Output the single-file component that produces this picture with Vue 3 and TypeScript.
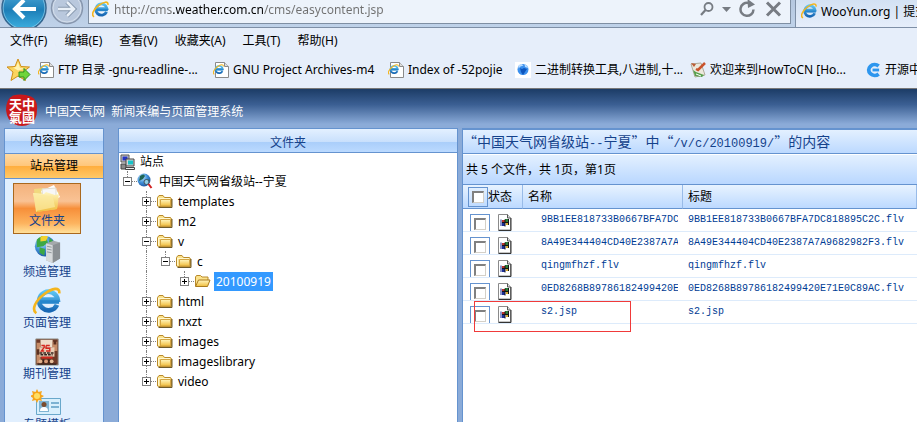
<script setup lang="ts">
import { ref } from 'vue'

interface Fav { label: string; icon: string; wide: boolean }
interface Node { label: string; level: number; open: boolean; selected?: boolean }
interface FileRow { name: string; marked?: boolean }

const address = ref('http://cms.weather.com.cn/cms/easycontent.jsp')
const menus: string[] = ['文件(F)', '编辑(E)', '查看(V)', '收藏夹(A)', '工具(T)', '帮助(H)']
const favs: Fav[] = [
  { label: 'FTP 目录 -gnu-readline-...', icon: 'page', wide: true },
  { label: 'GNU Project Archives-m4', icon: 'page', wide: true },
  { label: 'Index of -52pojie', icon: 'page', wide: false },
  { label: '二进制转换工具,八进制,十...', icon: 'globe', wide: true },
  { label: '欢迎来到HowToCN [Ho...', icon: 'brush', wide: true },
  { label: '开源中国', icon: 'osc', wide: true },
]
const tools: { label: string; icon: string }[] = [
  { label: '文件夹', icon: 'folder' },
  { label: '频道管理', icon: 'server' },
  { label: '页面管理', icon: 'ie' },
  { label: '期刊管理', icon: 'magazine' },
  { label: '专题模板', icon: 'template' },
]
const nodes: Node[] = [
  { label: 'templates', level: 1, open: false },
  { label: 'm2', level: 1, open: false },
  { label: 'v', level: 1, open: true },
  { label: 'c', level: 2, open: true },
  { label: '20100919', level: 3, open: false, selected: true },
  { label: 'html', level: 1, open: false },
  { label: 'nxzt', level: 1, open: false },
  { label: 'images', level: 1, open: false },
  { label: 'imageslibrary', level: 1, open: false },
  { label: 'video', level: 1, open: false },
]
const files: FileRow[] = [
  { name: '9BB1EE818733B0667BFA7DC818895C2C.flv' },
  { name: '8A49E344404CD40E2387A7A9682982F3.flv' },
  { name: 'qingmfhzf.flv' },
  { name: '0ED8268B89786182499420E71E0C89AC.flv' },
  { name: 's2.jsp', marked: true },
]
</script>

<template>
  <div class="window">
    <svg class="defs" width="0" height="0" aria-hidden="true">
      <defs>
        <linearGradient id="backFill" x1="0" y1="0" x2="0" y2="1">
          <stop offset="0" stop-color="#5fb4e0" /><stop offset=".55" stop-color="#1d7fb8" /><stop offset="1" stop-color="#3fb2e2" />
        </linearGradient>
        <linearGradient id="ieFill" x1="0" y1="0" x2="0" y2="1">
          <stop offset="0" stop-color="#5cc4f2" /><stop offset="1" stop-color="#1767b4" />
        </linearGradient>
        <linearGradient id="gold" x1="0" y1="0" x2="0" y2="1">
          <stop offset="0" stop-color="#fff6c0" /><stop offset="1" stop-color="#f0bd3c" />
        </linearGradient>
        <radialGradient id="ball" cx=".35" cy=".3" r=".8">
          <stop offset="0" stop-color="#c8ecff" /><stop offset=".5" stop-color="#3f8fd8" /><stop offset="1" stop-color="#174a94" />
        </radialGradient>
        <symbol id="ie" viewBox="0 0 16 16">
          <path d="M13.7 10.2a5.3 5.3 0 1 1 .4-3H4.2" fill="none" stroke="url(#ieFill)" stroke-width="2.7" />
          <path d="M4 8.6h10.9" stroke="#2686cc" stroke-width="2" />
          <path d="M1.9 15C-1 13 1.3 7.800 6.500 4 11 .6 15.500-.2 15 3.600" fill="none" stroke="#f4b51e" stroke-width="1.500" />
        </symbol>
        <symbol id="closedFolder" viewBox="0 0 17 16">
          <path d="M1.500 13V4.500L3 2.500h4l1.500 2h6l1 1.500v7.500h-13z" fill="#fbe28c" stroke="#b98a2a" />
          <path d="M4.500 6.500h10V13h-10z" fill="url(#gold)" stroke="#d3a544" />
          <path d="M2.500 14.500h13.500V6" fill="none" stroke="#6d5a2a" />
          <path d="M3 5.500h11M2.500 5v7" fill="none" stroke="#fff8cf" />
        </symbol>
        <symbol id="openFolder" viewBox="0 0 17 16">
          <path d="M1.500 13V4l1-1.500h4L8 4h6v3" fill="#fbe28c" stroke="#b98a2a" />
          <path d="M1.500 13.500 4.500 7h11.500l-2.500 6.500z" fill="url(#gold)" stroke="#a97a1c" />
        </symbol>
      </defs>
    </svg>

    <header class="browser">
      <div class="navbar">
        <div class="history">
          <button class="plain" aria-label="Back">
            <svg width="50" height="27" viewBox="0 0 50 27">
              <circle cx="24" cy="8" r="22" fill="url(#backFill)" stroke="#35668f" stroke-width="1.500" />
              <circle cx="24" cy="8" r="20.800" fill="none" stroke="#9fd6f0" opacity=".6" />
              <path d="M36 9H15M24 0l-9 9 9 9" fill="none" stroke="#fff" stroke-width="4" />
            </svg>
          </button>
          <button class="plain" aria-label="Forward">
            <svg width="36" height="27" viewBox="50 0 36 27">
              <circle cx="67" cy="8" r="15.500" fill="#b9c8dd" stroke="#8796ad" stroke-width="1.500" />
              <circle cx="67" cy="8" r="14" fill="none" stroke="#d5dfec" />
              <path d="M58 9h16M67 2l7 7-7 7" fill="none" stroke="#8798ae" stroke-width="4.500" />
              <path d="M58 9h16M67 2l7 7-7 7" fill="none" stroke="#e9f0f8" stroke-width="2.500" />
            </svg>
          </button>
        </div>
        <div class="address">
          <svg width="17" height="17"><use href="#ie" /></svg>
          <input v-model="address" type="text" aria-label="Address" />
          <button class="plain" aria-label="Search">
            <svg width="14" height="16" viewBox="0 0 14 16"><circle cx="8.500" cy="6" r="4" fill="none" stroke="#777c83" stroke-width="1.800" /><path d="M5.500 9 1 14" stroke="#777c83" stroke-width="2.200" /></svg>
          </button>
          <button class="plain drop" aria-label="History">
            <svg width="9" height="5" viewBox="0 0 9 5"><path d="M0 0h9L4.500 5z" fill="#777c83" /></svg>
          </button>
          <button class="plain" aria-label="Refresh">
            <svg width="17" height="18" viewBox="0 0 17 18"><path d="M14.500 9.500A6.500 6.500 0 1 1 9.500 3" fill="none" stroke="#777c83" stroke-width="2.500" /><path d="M8.500-1 16 4.500 9 8z" fill="#777c83" /></svg>
          </button>
          <button class="plain" aria-label="Stop">
            <svg width="17" height="18" viewBox="0 0 17 18"><path d="m2 2.500 13 13m0-13-13 13" stroke="#777c83" stroke-width="3" /></svg>
          </button>
        </div>
        <a class="tab" href="#">
          <svg width="16" height="16"><use href="#ie" /></svg>
          <span>WooYun.org | 提交漏洞</span>
        </a>
      </div>

      <nav class="menubar">
        <button v-for="m in menus" :key="m" class="plain">{{ m }}</button>
      </nav>

      <nav class="favbar">
        <button class="plain star" aria-label="Add to favorites">
          <svg width="24" height="24" viewBox="0 0 24 24">
            <path d="m11 1 3 7.500 8.500.5-6.500 5 2.500 8.500L11 18l-7 4.500L6 14 0 9l8-.5z" fill="#fbd55e" stroke="#cf8f1b" />
            <path d="m11 4 2 6 5 .5-7 2-5-3 3-.5z" fill="#fff3b4" />
            <path d="M12 14h5v-3.500l6 6-6 6V19h-5z" fill="#6fd53a" stroke="#2f9120" />
          </svg>
        </button>
        <a v-for="f in favs" :key="f.label" href="#" class="fav" :class="{ wide: f.wide }">
          <svg v-if="f.icon === 'page'" width="16" height="16" viewBox="0 0 16 16">
            <path d="M2.500.5h9l4 4v11h-13z" fill="#fff" stroke="#8a8a8a" /><path d="M11.500.5v4h4" fill="#ddd" stroke="#8a8a8a" />
            <use href="#ie" x="0" y="2" width="11" height="11" />
          </svg>
          <svg v-else-if="f.icon === 'globe'" width="16" height="16" viewBox="0 0 16 16">
            <path d="M0 0h16v16H0z" fill="#fff" /><circle cx="8" cy="7.500" r="5.500" fill="#3b90ee" />
            <path d="m3.500 3 3-1 2 1.500-3 1-2 2zm6-1 3 2 .5 2-3-1z" fill="#b9dcff" /><path d="m5 6 2 1 2-1 3 1-2 3-2 3-2-3z" fill="#0d55bd" />
          </svg>
          <svg v-else-if="f.icon === 'brush'" width="16" height="16" viewBox="0 0 16 16">
            <path d="m1 2 10-1 4 12-10 2z" fill="#ece8dc" stroke="#b0aa9a" /><path d="m1 1 5 1-2 3z" fill="#bb5b35" />
            <path d="m6 7 2 1 7-7" fill="none" stroke="#c9532d" stroke-width="2.500" /><path d="m3 8 3 2 8 3-2 2-7-1z" fill="#58a04e" /><path d="m6 12 5 2" stroke="#fff" />
          </svg>
          <svg v-else width="16" height="16" viewBox="0 0 17 16">
            <path d="M14.500 3.800A6.300 5.700 0 1 0 14.500 12.200" fill="none" stroke="#2d96ee" stroke-width="4" /><path d="M8 8h7" stroke="#2d96ee" stroke-width="3" />
          </svg>
          <span>{{ f.label }}</span>
        </a>
      </nav>
    </header>

    <div class="app">
      <div class="banner">
        <svg width="32" height="33" viewBox="0 0 32 33" role="img">
          <path d="M7 1.500Q16-1 25 2.500 32 6 31 16q0 10-7 14-8 4-16 0Q1 26 0 16 0 5 7 1.500z" fill="#c9181b" />
          <g class="seal"><text x="3" y="15">天</text><text x="16" y="15">中</text><text x="3" y="28">氣</text><text x="16" y="28">國</text></g>
        </svg>
        <h1>中国天气网&nbsp; 新闻采编与页面管理系统</h1>
      </div>

      <div class="columns">
        <aside class="sidebar">
          <button class="section">内容管理</button>
          <button class="section active">站点管理</button>
          <nav class="tools">
            <button v-for="(t, i) in tools" :key="t.label" class="tool" :class="{ current: i === 0 }">
              <svg v-if="t.icon === 'folder'" width="32" height="28" viewBox="0 0 32 28">
                <path d="m3 4 10-1 2 2 13 2-2 17-21 3z" fill="#f1d97f" /><path d="m10 6 13-6 6 12-15 8z" fill="#fff" /><path d="m11 4 14-1v12H12z" fill="#f7f7f7" stroke="#e1ddd0" />
                <path d="m2 8 11 1 2-2 9 3 4-1-2 15-20 3z" fill="url(#gold)" /><path d="m2 8 3 18 19-4-2-10z" fill="#fbeaa0" opacity=".7" />
              </svg>
              <svg v-else-if="t.icon === 'server'" width="32" height="30" viewBox="0 0 32 30">
                <circle cx="14" cy="11" r="11" fill="url(#ball)" /><path d="M5 4q6-6 10-3l2 6-5 4-7 1zm3 8 6 2-1 7-5-3zM19 2l5 5-3 4-3-4z" fill="#3da844" /><path d="M9 1q6-3 8 0l-2 4-6 1z" fill="#f1d22f" />
                <path d="m15 8 8-3 7 2v17l-8 5-7-3z" fill="#a5a9ac" /><path d="m22 10 8-3v17l-8 5z" fill="#8b9094" /><path d="m15 8 7 2v19l-7-3z" fill="#d7dadc" /><path d="m16 11 5 1m-5 2 5 1m-5 2 5 1" stroke="#8e9498" />
              </svg>
              <svg v-else-if="t.icon === 'ie'" width="30" height="30"><use href="#ie" /></svg>
              <svg v-else-if="t.icon === 'magazine'" width="26" height="30" viewBox="0 0 26 30">
                <path d="M1 1h24v28H1z" fill="#6e3a28" stroke="#9a9a92" /><path d="M6 2h13v8H6z" fill="#efdcc8" /><path d="M2 5h4v22H2zM19 4h5v10h-5z" fill="#c58b66" /><path d="M20 3h3v4h-3zM2 12h3v6H2z" fill="#5a3020" />
                <path d="M5 10h16v10H5z" fill="#e9cdb5" /><path d="M7 8h3v2l-3 4h3m2-6h4m-4 0v3h4v3h-4" fill="none" stroke="#d4271e" stroke-width="1.500" /><path d="M5 16h16M6 18h13" stroke="#33231d" stroke-width="1.500" stroke-dasharray="3 1" /><path d="M7 20h12v2H7z" fill="#d4271e" />
                <circle cx="6" cy="25" r="2" fill="#e0b28d" /><circle cx="12" cy="25" r="2" fill="#d69a77" /><circle cx="18" cy="25" r="2" fill="#e8c09b" /><path d="M3 28h20M9 23v4m6-4v4" stroke="#1d1512" />
              </svg>
              <svg v-else width="32" height="28" viewBox="0 0 32 28">
                <path d="M5.500 9.500h24v16h-24z" fill="#d8effc" stroke="#69a8cb" /><path d="M8 12h10v11H8z" fill="#7fb4d3" /><circle cx="13" cy="15.500" r="2.500" fill="#7a4c2e" /><path d="M9 22q0-4 4-4t4 4z" fill="#fff" /><path d="M20 14h8m-8 4h8" stroke="#5d9fc4" stroke-width="1.500" />
                <path d="m6 0 1.500 3L11 2l-1 3.500 3 1.500-3 2 1 3-3.500-1L6 14l-1.500-3L1 12l1-3-3-2 3-1.500L1 2l3.500 1z" fill="#f6a51b" /><circle cx="6" cy="7" r="3" fill="#ffdf63" />
              </svg>
              <span>{{ t.label }}</span>
            </button>
          </nav>
        </aside>

        <section class="treepanel">
          <h2>文件夹</h2>
          <div class="site">
            <svg width="15" height="16" viewBox="0 0 15 16">
              <path d="M1 1h8v7H1z" fill="#c9c9c9" stroke="#555" /><path d="M2.500 2.500h5v4h-5z" fill="#2434c4" /><path d="M1 10h5v5H1z" fill="#8a8a8a" stroke="#444" /><path d="M6 5h8v7H6z" fill="#d6d6d6" stroke="#444" /><path d="M8 6.500h5v4H8z" fill="#18c3c9" /><path d="M5.500 13.500h9v2h-9z" fill="#eee" stroke="#444" />
            </svg>
            <span>站点</span>
          </div>
          <ul class="tree">
            <li class="node root">
              <button class="toggle open" aria-label="Toggle"></button><i class="stub"></i>
              <svg width="16" height="16" viewBox="0 0 16 16"><circle cx="7" cy="7" r="6.500" fill="url(#ball)" /><path d="M3 3q4-3 5 0L6 6 2 8zm6 3 4 1-3 5-2-3z" fill="#1f6655" /><circle cx="9.500" cy="9" r="2.500" fill="#8fd0e6" stroke="#456" /><path d="m11.500 11 3 4" stroke="#d02020" stroke-width="2" /></svg>
              <span class="label">中国天气网省级站--宁夏</span>
            </li>
            <li v-for="n in nodes" :key="n.label" class="node" :class="['level' + n.level]">
              <button class="toggle" :class="{ open: n.open }" aria-label="Toggle"></button><i class="stub"></i>
              <svg width="17" height="16"><use :href="n.selected ? '#openFolder' : '#closedFolder'" /></svg>
              <span class="label" :class="{ selected: n.selected }">{{ n.label }}</span>
            </li>
          </ul>
        </section>

        <main class="content">
          <h2 class="title">“中国天气网省级站<span>--</span>宁夏”<span> </span>中<span> </span>“<span>/v/c/20100919/</span>”<span> </span>的内容</h2>
          <p class="info">共 5 个文件，共 1页，第1页</p>
          <table>
            <colgroup><col class="c1" /><col class="c2" /><col /></colgroup>
            <thead>
              <tr>
                <th><label class="headcheck"><span class="box"><input type="checkbox" /></span>状态</label></th>
                <th>名称</th>
                <th>标题</th>
              </tr>
            </thead>
            <tbody>
              <tr v-for="f in files" :key="f.name">
                <td>
                  <div class="state">
                    <label class="box"><input type="checkbox" :aria-label="f.name" /></label>
                    <svg width="14" height="17" viewBox="0 0 14 17"><path d="M.5.500h9l3 3.500v12H.5z" fill="#fff" stroke="#8a8a8a" /><path d="M9.500.5V4h3" fill="#ddd" stroke="#555" /><path d="M.5 16.500h12.500V4" fill="none" stroke="#333" /><path d="M2 5.500h2V12H2z" fill="#8a93c8" /><path d="M4 6h3v3H4z" fill="#b8302b" /><path d="M7 5h4v3H7z" fill="#2c7d3a" /><path d="M4 9h3v3H4z" fill="#1c2f96" /><path d="M8 9h3v2H8z" fill="#d9a92c" /><path d="M7 5.500v7M4 8.500h7M10.500 5v6" stroke="#151515" /></svg>
                  </div>
                  <div v-if="f.marked" class="mark"></div>
                </td>
                <td><div class="clip">{{ f.name }}</div></td>
                <td><div class="full">{{ f.name }}</div></td>
              </tr>
            </tbody>
          </table>
        </main>
      </div>
    </div>
  </div>
</template>

<style>
body { overflow: hidden; }
</style>

<style scoped>
* { box-sizing: border-box; }
.window { height: 100vh; display: flex; flex-direction: column; overflow: hidden; font: 12px/16px "Noto Sans", "Noto Sans CJK SC", sans-serif; color: #000; }
.defs { position: absolute; }
svg { flex: none; display: block; }
button { font: inherit; color: inherit; cursor: pointer; }
.plain { padding: 0; border: 0; background: none; white-space: nowrap; }
a { color: inherit; text-decoration: none; white-space: nowrap; }
h1, h2, p, ul { margin: 0; padding: 0; font-weight: normal; }

.browser { flex: none; background: #e6eefa; border-bottom: 1px solid #777; }
.navbar { display: flex; height: 28px; background: linear-gradient(#b5c7df, #bfd2e9); border-bottom: 1px solid #7e8fa6; overflow: hidden; }
.history { display: flex; width: 88px; }
.address { flex: 1; display: flex; align-items: center; gap: 5px; height: 24px; padding: 0 6px 5px 3px; background: #edf3fb; border: 1px solid #7f8fa3; border-top: 0; }
.address input { flex: 1; min-width: 0; height: 19px; padding: 0; border: 0; outline: 0; font: 12px/19px "Noto Sans", sans-serif; color: transparent; background: linear-gradient(90deg, #707070 59px, #000 59px, #000 149px, #707070 149px); -webkit-background-clip: text; background-clip: text; }
.address .plain { padding: 0 2px; }
.address .drop { padding: 0 1px; }
.tab { display: flex; align-items: flex-start; gap: 4px; width: 122px; margin-left: 4px; padding: 3px 0 0 5px; background: linear-gradient(#d3e1f3, #e6eefa); border-left: 1px solid #7e8fa6; overflow: hidden; line-height: 17px; }

.menubar { display: flex; gap: 17px; height: 26px; padding: 3px 10px; line-height: 18px; }
.favbar { display: flex; align-items: center; gap: 10px; height: 34px; padding: 0 0 2px 7px; overflow: hidden; }
.star { margin-right: -3px; }
.fav { flex: none; display: flex; align-items: center; gap: 4px; width: 117px; }
.wide { width: 165px; }

.app { flex: 1; min-height: 0; display: flex; flex-direction: column; background: #8babd8; }
.banner { flex: none; display: flex; gap: 7px; height: 39px; padding: 5px 6px 0; background: linear-gradient(#1c3c66, #3b5f93 40%, #8babd8 90%); color: #fff; }
.banner h1 { padding-top: 10px; font-size: 12px; line-height: 16px; }
.seal { fill: #fff; font: bold 13px "Noto Sans CJK SC", sans-serif; }

.columns { flex: 1; min-height: 0; display: flex; padding-left: 4px; }
.sidebar { flex: none; width: 100px; display: flex; flex-direction: column; background: #e1effe; border: solid #6593cf; border-width: 1px 1px 0; overflow: hidden; }
.section { flex: none; height: 25px; padding: 0 0 1px; border: 0; border-bottom: 1px solid #6593cf; background: linear-gradient(#e3f0ff, #c8dffb 48%, #aacefa 50%, #bbdaff); }
.section.active { background: linear-gradient(#ffd9a3, #ffc77c 48%, #ffad3e 50%, #ffc968); }
.tools { display: flex; flex-direction: column; padding: 4px 0 0 8px; }
.tool { flex: none; width: 68px; height: 51px; display: flex; flex-direction: column; align-items: center; padding: 1px 0 0; border: 1px solid transparent; background: none; color: #15428b; }
.tool svg { height: 28px; }
.tool.current { border-color: #a9681e; background: linear-gradient(#f3b27c, #f9c294 35%, #f78f3a 50%, #fdb35e 80%, #ffe09a); }

.treepanel { flex: 1; min-width: 200px; max-width: 340px; margin-left: 14px; background: #fff; border: solid #6593cf; border-width: 1px 1px 0; overflow: hidden; }
.treepanel h2 { height: 24px; padding-top: 6px; font-size: 12px; line-height: 16px; text-align: center; color: #15428b; border-bottom: 1px solid #6593cf; background: linear-gradient(#e3f0ff, #c9e0fc 55%, #aacefa 58%, #bbdaff); }
.site { display: flex; align-items: center; gap: 5px; height: 18px; padding-left: 1px; }
.tree { list-style: none; }
.node { position: relative; display: flex; align-items: center; height: 20px; padding-left: 23px; }
.node.root { padding-left: 4px; }
.level2 { padding-left: 42px; }
.level3 { padding-left: 61px; }
.node::before { content: ""; position: absolute; left: 27px; top: 0; height: 20px; border-left: 1px dotted #808080; }
.root::before { left: 8px; height: 10px; }
.node:last-child::before { height: 10px; }
.level2::after, .level3::after { content: ""; position: absolute; left: 46px; top: 0; height: 10px; border-left: 1px dotted #808080; }
.level3::after { left: 65px; }
.toggle { position: relative; z-index: 1; flex: none; width: 9px; height: 9px; padding: 0; border: 1px solid #808080; background: linear-gradient(#000, #000) center / 5px 1px no-repeat, linear-gradient(#000, #000) center / 1px 5px no-repeat, #fff; }
.toggle.open { background: linear-gradient(#000, #000) center / 5px 1px no-repeat, #fff; }
.stub { width: 5px; border-top: 1px dotted #808080; }
.label { margin-left: 3px; padding: 0 2px; line-height: 19px; white-space: nowrap; }
.root .label { margin-left: 4px; }
.selected { background: #3399ff; color: #fff; }

.content { flex: 1 1 116px; min-width: 0; margin-left: 4px; background: #fff; border: solid #6593cf; border-width: 2px 0 0 1px; }
.title { height: 24px; padding: 3px 0 0; font: 14px/17px "Noto Sans CJK SC", sans-serif; color: #15428b; white-space: pre; border-bottom: 1px solid #6593cf; background: linear-gradient(#e3f0ff, #bcd9ff); }
.title span { font: 12px/17px "Liberation Mono", monospace; }
.info { height: 30px; padding: 7px 3px; line-height: 16px; border-top: 1px solid #fff; background: linear-gradient(#e3f0ff, #b9d7ff); }
table { width: 100%; table-layout: fixed; border-collapse: separate; border-spacing: 0; border-top: 1px solid #6593cf; }
.c1 { width: 60px; }
.c2 { width: 160px; }
th { height: 24px; padding: 0 5px; text-align: left; font-weight: normal; border-bottom: 1px solid #6593cf; border-right: 1px solid #99bbe8; background: linear-gradient(#e8f3ff, #bcd9ff); }
th:first-child { padding-right: 0; }
.headcheck { display: flex; align-items: center; line-height: 20px; }
.box { flex: none; display: block; width: 20px; height: 20px; padding: 3px; border: 1px solid #6593cf; }
input[type="checkbox"] { appearance: none; display: block; width: 12px; height: 12px; margin: 0; background: #fff; border: solid; border-width: 2px 1px 1px 2px; border-color: #808080 #d4d0c8 #d4d0c8 #808080; }
td { position: relative; height: 23px; padding: 0; border-bottom: 1px solid #ddebfb; vertical-align: top; color: #003c94; font: 10px/14px "Liberation Mono", monospace; }
.state { display: flex; gap: 8px; height: 22px; padding: 5px 0 0 7px; overflow: hidden; }
.clip { margin: 4px 5px 0 18px; overflow: hidden; }
.full { padding: 4px 5px 0; }
.mark { position: absolute; z-index: 2; left: 11px; top: 0; width: 157px; height: 31px; border: 1px solid #f03a3a; }
</style>
